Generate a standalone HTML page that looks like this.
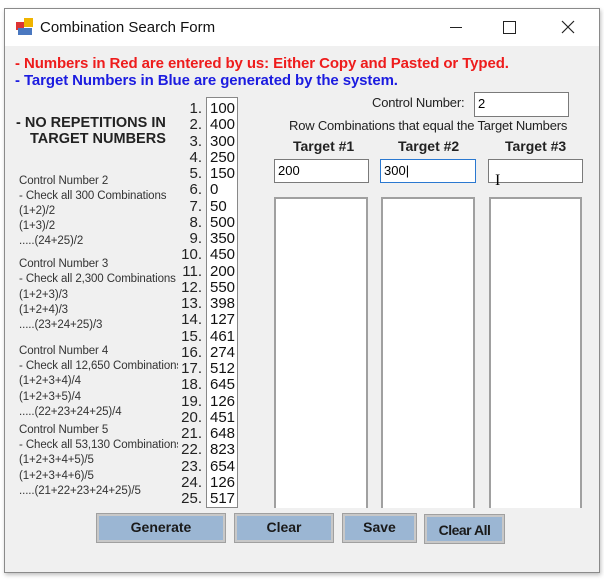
<!DOCTYPE html>
<html><head><style>
body{margin:0;width:604px;height:582px;background:#fff;position:relative;overflow:hidden;font-family:"Liberation Sans",sans-serif}
.a{position:absolute;white-space:nowrap}
.win{position:absolute;left:4px;top:8px;width:594px;height:563px;border:1px solid #8a8a8a;background:#f0f0f0;box-shadow:1px 2px 4px rgba(0,0,0,.25)}
.tb{position:absolute;left:5px;top:9px;width:594px;height:37px;background:#fff}
.s{font-size:11.5px;color:#333;letter-spacing:-0.1px}
.n{font-size:15px;color:#222;text-align:right;width:26px;left:176px}
.v{font-size:15px;color:#111;left:210px}
.box{position:absolute;background:#fff;border:1px solid #7a7a7a;box-sizing:border-box}
.btn{position:absolute;background:#9bb6d3;border:2px solid #c8c8c8;outline:1px solid #a0a0a0;font-weight:bold;font-size:14px;text-align:center;color:#1a1a1a;box-sizing:border-box}
.th{font-weight:bold;font-size:14px;color:#222}
</style></head><body>
<div class="win"></div>
<div class="tb"></div>
<svg class="a" style="left:16px;top:18px" width="18" height="18"><rect x="0" y="4" width="8" height="8" fill="#d33"/><rect x="8" y="0" width="9" height="9" fill="#f0b400"/><rect x="2" y="10" width="14" height="7" fill="#4a78c0"/></svg>
<div class="a" style="left:40px;top:19px;font-size:15px;color:#111">Combination Search Form</div>
<div class="a" style="left:450px;top:27px;width:12px;height:1px;background:#222"></div>
<div class="a" style="left:503px;top:21px;width:11px;height:11px;border:1px solid #222"></div>
<svg class="a" style="left:561px;top:20px" width="14" height="14"><path d="M1 1L13 13M13 1L1 13" stroke="#222" stroke-width="1.2"/></svg>
<div class="a" style="left:15px;top:55px;font-size:15px;font-weight:bold;color:#ee1c1c;letter-spacing:-0.1px">- Numbers in Red are entered by us: Either Copy and Pasted or Typed.</div>
<div class="a" style="left:15px;top:72px;font-size:15px;font-weight:bold;color:#1c1ce0;letter-spacing:-0.1px">- Target Numbers in Blue are generated by the system.</div>
<div class="a" style="left:16px;top:115px;font-size:14.5px;font-weight:bold;color:#222">- NO REPETITIONS IN</div>
<div class="a" style="left:30px;top:131px;font-size:14.5px;font-weight:bold;color:#222">TARGET NUMBERS</div>

<div class="a s" style="left:19px;top:174px;line-height:15px">Control Number 2<br>- Check all 300 Combinations<br>(1+2)/2<br>(1+3)/2<br>.....(24+25)/2</div>
<div class="a s" style="left:19px;top:257px;line-height:15.3px">Control Number 3<br>- Check all 2,300 Combinations<br>(1+2+3)/3<br>(1+2+4)/3<br>.....(23+24+25)/3</div>
<div class="a s" style="left:19px;top:344px;line-height:15.2px">Control Number 4<br>- Check all 12,650 Combinations<br>(1+2+3+4)/4<br>(1+2+3+5)/4<br>.....(22+23+24+25)/4</div>
<div class="a s" style="left:19px;top:423px;line-height:15.2px">Control Number 5<br>- Check all 53,130 Combinations<br>(1+2+3+4+5)/5<br>(1+2+3+4+6)/5<br>.....(21+22+23+24+25)/5</div>
<div class="a" style="left:178px;top:350px;width:28px;height:120px;background:#f0f0f0"></div>

<div class="box" style="left:206px;top:97px;width:32px;height:411px;border-color:#888"></div>
<div class="a n" style="top:101px;line-height:16.25px">1.<br>2.<br>3.<br>4.<br>5.<br>6.<br>7.<br>8.<br>9.<br>10.<br>11.<br>12.<br>13.<br>14.<br>15.<br>16.<br>17.<br>18.<br>19.<br>20.<br>21.<br>22.<br>23.<br>24.<br>25.</div>
<div class="a v" style="top:101px;line-height:16.25px">100<br>400<br>300<br>250<br>150<br>0<br>50<br>500<br>350<br>450<br>200<br>550<br>398<br>127<br>461<br>274<br>512<br>645<br>126<br>451<br>648<br>823<br>654<br>126<br>517</div>

<div class="a" style="left:372px;top:95px;font-size:13px;color:#222;letter-spacing:-0.2px">Control Number:</div>
<div class="box" style="left:474px;top:92px;width:95px;height:25px"></div>
<div class="a" style="left:478px;top:96px;font-size:13px">2</div>
<div class="a" style="left:289px;top:118px;font-size:13px;color:#222;letter-spacing:-0.2px">Row Combinations that equal the Target Numbers</div>
<div class="a th" style="left:293px;top:138px">Target #1</div>
<div class="a th" style="left:398px;top:138px">Target #2</div>
<div class="a th" style="left:505px;top:138px">Target #3</div>
<div class="box" style="left:274px;top:159px;width:95px;height:24px"></div>
<div class="a" style="left:278px;top:163px;font-size:13px">200</div>
<div class="box" style="left:380px;top:159px;width:96px;height:24px;border-color:#2a78d0"></div>
<div class="a" style="left:384px;top:163px;font-size:13px">300|</div>
<div class="box" style="left:488px;top:159px;width:95px;height:24px"></div>
<div class="a" style="left:495px;top:172px;font-size:16px;font-family:'Liberation Serif',serif">I</div>
<div class="box" style="left:274px;top:197px;width:94px;height:311px;border:2px solid #a0a0a0;border-bottom:none"></div>
<div class="box" style="left:381px;top:197px;width:94px;height:311px;border:2px solid #a0a0a0;border-bottom:none"></div>
<div class="box" style="left:489px;top:197px;width:93px;height:311px;border:2px solid #a0a0a0;border-bottom:none"></div>

<div class="btn" style="left:97px;top:514px;width:128px;height:28px;line-height:23px">Generate</div>
<div class="btn" style="left:235px;top:514px;width:98px;height:28px;line-height:23px">Clear</div>
<div class="btn" style="left:343px;top:514px;width:73px;height:28px;line-height:23px">Save</div>
<div class="btn" style="left:425px;top:515px;width:79px;height:28px;line-height:27px;letter-spacing:-0.5px">Clear All</div>
</body></html>
